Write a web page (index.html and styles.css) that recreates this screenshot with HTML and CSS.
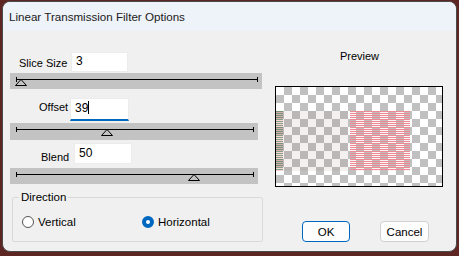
FILE: index.html
```html
<!DOCTYPE html>
<html lang="en">
<head>
    <meta charset="UTF-8">
    <title>Linear Transmission Filter Options</title>
    <link rel="stylesheet" href="styles.css">
</head>
<body>
    <div class="window">
        <div class="titlebar">Linear Transmission Filter Options</div>

        <div class="content">
            <div class="controls">
                <div class="field field-slice">
                    <span class="field-label">Slice Size</span>
                    <div class="textbox">3</div>
                </div>
                <div class="slider slider-wide">
                    <div class="track"></div>
                    <svg class="thumb" style="left: 5px" width="12" height="8" viewBox="0 0 12 8">
                        <polygon points="6,0.5 11.5,6.5 0.5,6.5" fill="none" stroke="#000" stroke-width="1"/>
                    </svg>
                </div>

                <div class="field field-offset">
                    <span class="field-label">Offset</span>
                    <div class="textbox focused">39<span class="caret"></span></div>
                </div>
                <div class="slider">
                    <div class="track"></div>
                    <svg class="thumb" style="left: 91px" width="12" height="8" viewBox="0 0 12 8">
                        <polygon points="6,0.5 11.5,6.5 0.5,6.5" fill="none" stroke="#000" stroke-width="1"/>
                    </svg>
                </div>

                <div class="field field-blend">
                    <span class="field-label">Blend</span>
                    <div class="textbox">50</div>
                </div>
                <div class="slider">
                    <div class="track"></div>
                    <svg class="thumb" style="left: 178px" width="12" height="8" viewBox="0 0 12 8">
                        <polygon points="6,0.5 11.5,6.5 0.5,6.5" fill="none" stroke="#000" stroke-width="1"/>
                    </svg>
                </div>

                <fieldset class="direction">
                    <legend>Direction</legend>
                    <div class="radio-row">
                        <span class="radio"><span class="dot"></span>Vertical</span>
                        <span class="radio checked"><span class="dot"></span>Horizontal</span>
                    </div>
                </fieldset>
            </div>

            <div class="preview-col">
                <div class="preview-title">Preview</div>
                <div class="preview">
                    <div class="bands">
                        <div class="band-edge"></div>
                        <div class="band-faded"></div>
                        <div class="band-gap"></div>
                        <div class="band-red"></div>
                    </div>
                </div>
                <div class="buttons">
                    <button class="btn btn-primary">OK</button>
                    <button class="btn">Cancel</button>
                </div>
            </div>
        </div>
    </div>
</body>
</html>
```

FILE: styles.css
```css
body {
    margin: 0;
    background-color: #5e2623;
    font-family: "Liberation Sans", Arial, sans-serif;
    font-size: 11px;
    color: #000;
}

.window {
    margin: 1px 0 0 2px;
    width: 455px;
    height: 251px;
    box-sizing: border-box;
    border: 1px solid #4a4a4a;
    border-radius: 8px;
    background-color: #f0f0f0;
    overflow: hidden;
}

.titlebar {
    height: 29px;
    line-height: 29px;
    padding-left: 6px;
    background-color: #eef2f9;
    font-size: 11.6px;
    color: #1a1a1a;
}

.content {
    display: flex;
    gap: 13px;
    padding-left: 7px;
}

/* left side: fields + sliders */
.controls {
    width: 252px;
    display: flex;
    flex-direction: column;
}

.field {
    display: flex;
    align-items: flex-start;
}

.field-label {
    display: block;
}

.textbox {
    background-color: #fff;
    box-sizing: border-box;
    padding: 1px 4px;
    font-size: 12px;
    line-height: 14px;
    border: 1px solid #ececec;
}

.field-slice { margin-top: 21px; }
.field-slice .field-label { width: 52px; padding: 5px 0 0 9px; }
.field-slice .textbox { width: 57px; height: 20px; }

.field-offset { margin-top: 9px; }
.field-offset .field-label { width: 31px; padding: 3px 0 0 29px; }
.field-offset .textbox {
    width: 59px;
    height: 23px;
    padding-top: 2px;
    border-bottom: 2px solid #0067c0;
}

.field-blend { margin-top: 3px; }
.field-blend .field-label { width: 33px; padding: 8px 0 0 31px; }
.field-blend .textbox { width: 58px; height: 21px; padding-top: 2px; }

.caret {
    display: inline-block;
    width: 1px;
    height: 13px;
    vertical-align: -2px;
    background-color: #000;
}

.slider {
    position: relative;
    width: 248px;
    height: 17px;
    background-color: #c3c3c3;
    margin-top: 2px;
}

.slider-wide {
    width: 252px;
    height: 16px;
    margin-top: 1px;
}

.field-blend + .slider {
    margin-top: 4px;
    height: 16px;
}

.track {
    position: relative;
    margin: 6px 4px 0 6px;
    height: 1px;
    background-color: #000;
}

.track::before,
.track::after {
    content: "";
    position: absolute;
    top: -2px;
    width: 1px;
    height: 5px;
    background-color: #000;
}

.track::before { left: 0; }
.track::after { right: 0; }

.thumb {
    position: absolute;
    top: 6px;
}

/* direction group */
.direction {
    margin: 7px 0 0 2px;
    width: 250px;
    box-sizing: border-box;
    padding: 0 0 13px 9px;
    border: 1px solid #d9d9d9;
    border-radius: 2px;
}

.direction legend {
    padding: 0 2px;
    margin-left: -3px;
    line-height: 12px;
    font-size: 11.5px;
}

.radio-row {
    display: flex;
    padding-top: 13px;
}

.radio {
    display: flex;
    align-items: center;
    gap: 4px;
    width: 120px;
    height: 12px;
    font-size: 11.5px;
}

.dot {
    width: 12px;
    height: 12px;
    box-sizing: border-box;
    border: 1px solid #555;
    border-radius: 50%;
    background-color: #fff;
}

.checked .dot {
    border: 4px solid #0067c0;
    background-color: #fff;
}

/* right side: preview + buttons */
.preview-col {
    width: 168px;
    padding-top: 19px;
    display: flex;
    flex-direction: column;
}

.preview-title {
    text-align: center;
    line-height: 13px;
    padding-left: 1px;
}

.preview {
    margin-top: 23px;
    height: 101px;
    box-sizing: border-box;
    border: 1px solid #000;
    background-color: #fff;
    background-image: conic-gradient(#c0c0c0 25%, #fff 0 50%, #c0c0c0 0 75%, #fff 0);
    background-size: 16px 16px;
}

.bands {
    display: flex;
    margin-top: 24px;
    height: 60px;
}

.band-edge {
    width: 7px;
    background-image: linear-gradient(rgba(90, 130, 90, 0.75) 1px, rgba(240, 150, 160, 0.4) 1px);
    background-size: 100% 2px;
}

.band-faded {
    width: 65px;
    background-color: rgba(150, 110, 110, 0.1);
}

.band-gap {
    width: 2px;
}

.band-red {
    width: 60px;
    background-color: rgba(230, 140, 150, 0.1);
    background-image: linear-gradient(#ee8a96 1px, transparent 1px);
    background-size: 100% 2px;
}

.buttons {
    display: flex;
    margin-top: 34px;
    padding-left: 27px;
    gap: 30px;
}

.btn {
    height: 21px;
    width: 49px;
    padding: 0;
    font-family: "Liberation Sans", Arial, sans-serif;
    font-size: 11.5px;
    color: #000;
    background-color: #fdfdfd;
    border: 1px solid #d0d0d0;
    border-radius: 4px;
}

.btn-primary {
    width: 48px;
    border-color: #0067c0;
}
```
